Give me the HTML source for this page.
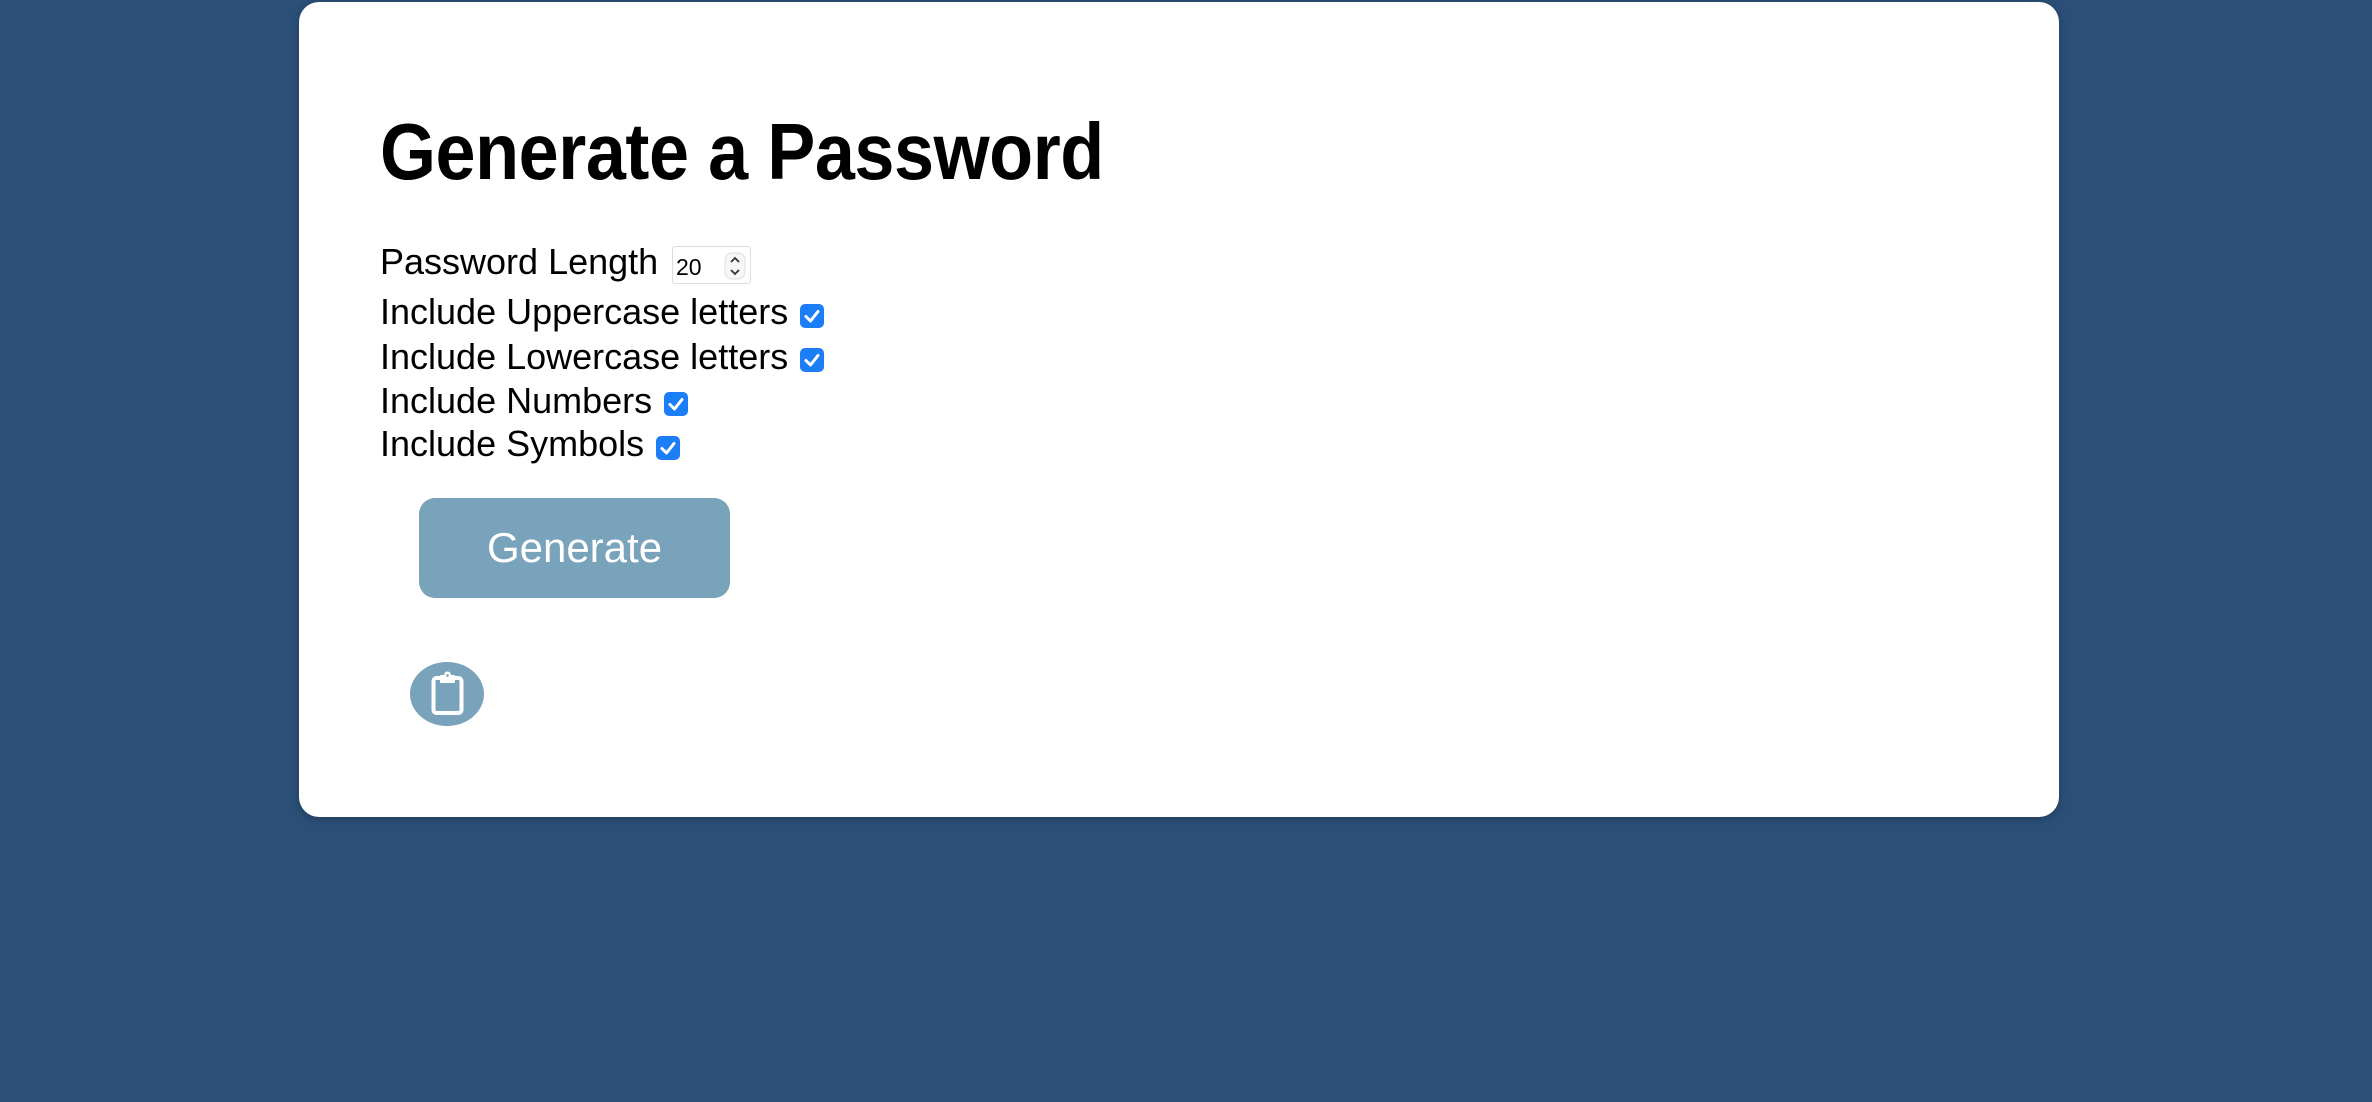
<!DOCTYPE html>
<html><head><meta charset="utf-8"><style>
html,body{margin:0;padding:0;width:2372px;height:1102px;overflow:hidden;background:#2b4f77;font-family:"Liberation Sans",Arial,sans-serif;}
.card{position:absolute;left:299px;top:2px;width:1760px;height:815px;background:#fff;border-radius:20px;box-shadow:0 2px 8px rgba(0,0,0,0.25);}
h1{position:absolute;left:380px;top:102px;margin:0;font-size:80px;font-weight:bold;line-height:100px;color:#000;transform:scaleX(0.9);transform-origin:0 0;white-space:nowrap;letter-spacing:-0.5px;}
.lbl{position:absolute;left:380px;font-size:36px;color:#000;line-height:44px;white-space:nowrap;}
.inp{position:absolute;left:672px;top:246px;width:79px;height:38px;border:1px solid #ddd;border-radius:3px;box-sizing:border-box;background:#fff;}
.inp span{position:absolute;left:3px;top:7px;font-size:23px;color:#000;}
.cb{position:absolute;width:24px;height:24px;background:#1c7ef6;border-radius:5px;}
.btn{position:absolute;left:419px;top:498px;width:311px;height:100px;background:#79a2bb;border-radius:16px;color:#fff;font-size:42px;text-align:center;line-height:100px;}
.clip{position:absolute;left:410px;top:662px;width:74px;height:64px;background:#79a2bb;border-radius:50%;}
</style></head><body>
<div class="card"></div>
<h1>Generate a Password</h1>
<div class="lbl" style="top:240px">Password Length</div>
<div class="inp"><span>20</span>
<svg style="position:absolute;left:51px;top:5px" width="22" height="28" viewBox="0 0 22 28"><rect x="1" y="1" width="20" height="26" rx="7" fill="#f6f6f6" stroke="#ddd"/><path d="M7 10 L11 6 L15 10 M7 18 L11 22 L15 18" fill="none" stroke="#333" stroke-width="1.8"/></svg></div>
<div class="lbl" style="top:290px">Include Uppercase letters</div>
<div class="lbl" style="top:335px">Include Lowercase letters</div>
<div class="lbl" style="top:379px">Include Numbers</div>
<div class="lbl" style="top:422px">Include Symbols</div>
<div class="cb" style="left:800px;top:304px"><svg width="24" height="24"><path d="M6 12.5 L10.5 17 L18 7.5" fill="none" stroke="#fff" stroke-width="3" stroke-linecap="round" stroke-linejoin="round"/></svg></div>
<div class="cb" style="left:800px;top:348px"><svg width="24" height="24"><path d="M6 12.5 L10.5 17 L18 7.5" fill="none" stroke="#fff" stroke-width="3" stroke-linecap="round" stroke-linejoin="round"/></svg></div>
<div class="cb" style="left:664px;top:392px"><svg width="24" height="24"><path d="M6 12.5 L10.5 17 L18 7.5" fill="none" stroke="#fff" stroke-width="3" stroke-linecap="round" stroke-linejoin="round"/></svg></div>
<div class="cb" style="left:656px;top:436px"><svg width="24" height="24"><path d="M6 12.5 L10.5 17 L18 7.5" fill="none" stroke="#fff" stroke-width="3" stroke-linecap="round" stroke-linejoin="round"/></svg></div>
<div class="btn">Generate</div>
<div class="clip"><svg width="74" height="64" viewBox="0 0 74 64"><rect x="23.5" y="16" width="28" height="35" rx="3" fill="none" stroke="#fff" stroke-width="4"/><rect x="30" y="13" width="15" height="8" rx="1" fill="#fff"/><circle cx="37.5" cy="13" r="3.5" fill="#fff"/><circle cx="37.5" cy="13.5" r="1.3" fill="#79a2bb"/></svg></div>
</body></html>
